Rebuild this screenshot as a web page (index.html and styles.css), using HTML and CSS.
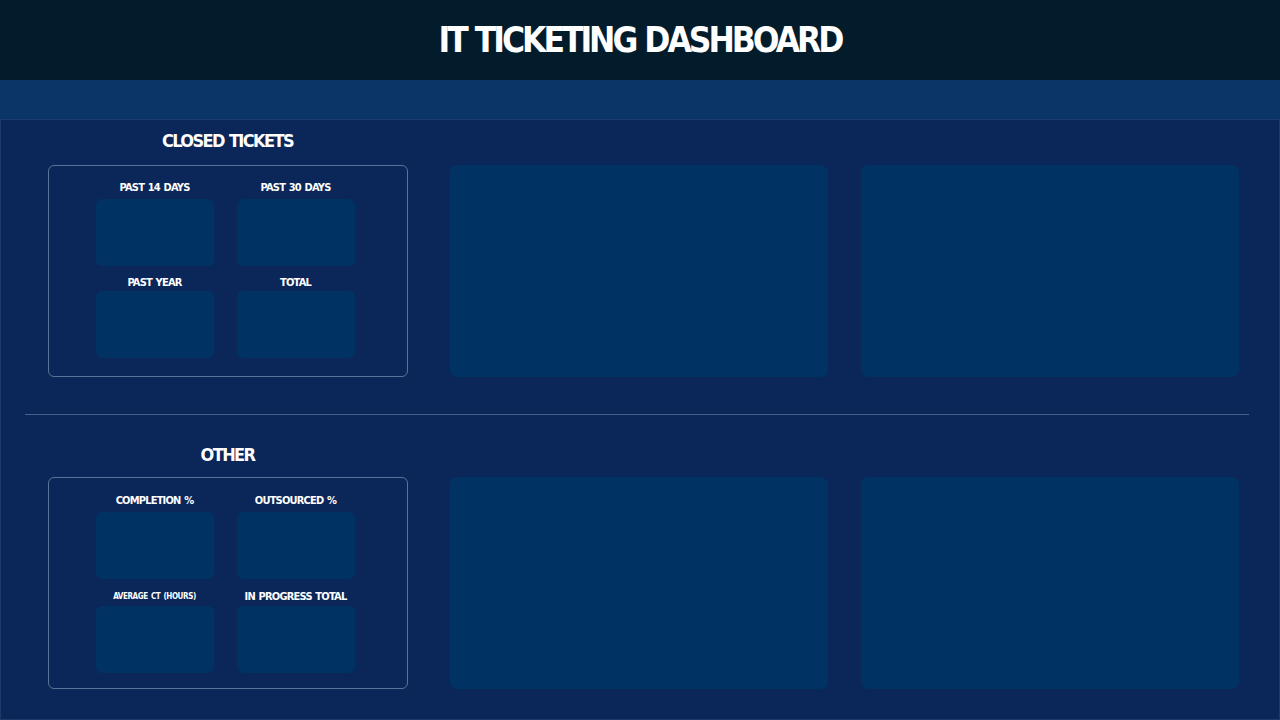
FILE: index.html
```html
<!DOCTYPE html>
<html lang="en">
<head>
<meta charset="utf-8">
<title>IT Ticketing Dashboard</title>
<link rel="stylesheet" href="styles.css">
</head>
<body>
<header class="topbar">
  <h1 class="title">IT TICKETING DASHBOARD</h1>
</header>
<div class="band"></div>
<main class="main">
  <section class="section">
    <div class="grid">
      <h2 class="section-title">CLOSED TICKETS</h2>
      <div></div><div></div>
      <div class="card">
        <div class="metrics">
          <div class="metric"><div class="label">PAST 14 DAYS</div><div class="box"></div></div>
          <div class="metric"><div class="label">PAST 30 DAYS</div><div class="box"></div></div>
          <div class="metric"><div class="label">PAST YEAR</div><div class="box"></div></div>
          <div class="metric"><div class="label">TOTAL</div><div class="box"></div></div>
        </div>
      </div>
      <div class="panel"></div>
      <div class="panel"></div>
    </div>
  </section>
  <hr class="divider">
  <section class="section section-other">
    <div class="grid">
      <h2 class="section-title section-title-other">OTHER</h2>
      <div></div><div></div>
      <div class="card card-other">
        <div class="metrics">
          <div class="metric"><div class="label">COMPLETION %</div><div class="box"></div></div>
          <div class="metric"><div class="label">OUTSOURCED %</div><div class="box"></div></div>
          <div class="metric"><div class="label label-small">AVERAGE CT (HOURS)</div><div class="box"></div></div>
          <div class="metric"><div class="label">IN PROGRESS TOTAL</div><div class="box"></div></div>
        </div>
      </div>
      <div class="panel"></div>
      <div class="panel"></div>
    </div>
  </section>
</main>
</body>
</html>
```
FILE: styles.css
```css
* { box-sizing: border-box; }
html, body {
  margin: 0;
  padding: 0;
  width: 1280px;
  height: 720px;
  overflow: hidden;
  background: #0b2658;
  font-family: "DejaVu Sans Condensed", "DejaVu Sans", sans-serif;
  font-stretch: condensed;
  color: #ffffff;
}
.topbar {
  height: 80px;
  background: #021c2c;
  display: flex;
  align-items: center;
  justify-content: center;
}
.title {
  margin: 0;
  font-size: 35px;
  font-weight: 700;
  line-height: 1;
  letter-spacing: -3px;
  word-spacing: 1px;
}
.band {
  height: 39px;
  background: #0a3566;
}
.main {
  height: 601px;
  border: 1px solid #1c3a6a;
  padding: 9px 23px 0 21px;
}
.grid {
  display: grid;
  grid-template-columns: repeat(3, 411px);
}
.section-title {
  margin: 0 0 12px;
  height: 24px;
  line-height: 24px;
  font-size: 18px;
  font-weight: 700;
  text-align: center;
  letter-spacing: -1.6px;
  word-spacing: 1px;
}
.section-title-other { margin-bottom: 10px; }
.card {
  justify-self: center;
  width: 360px;
  height: 212px;
  border: 1px solid #5a7399;
  border-radius: 6px;
  padding: 16px 0 0 47px;
}
.card-other { padding-top: 17px; }
.metrics {
  display: grid;
  grid-template-columns: 118px 118px;
  column-gap: 23px;
  row-gap: 11px;
}
.card-other .metrics { row-gap: 12px; }
.label {
  height: 12px;
  line-height: 12px;
  font-size: 11px;
  font-weight: 700;
  text-align: center;
  white-space: nowrap;
  letter-spacing: -0.8px;
  word-spacing: 1px;
  margin-bottom: 5px;
}
.metric:nth-child(n+3) .label { margin-bottom: 2px; }
.card-other .metric:nth-child(n+3) .label { margin-bottom: 3px; }
.label-small { font-size: 8px; letter-spacing: -0.4px; }
.box {
  height: 67px;
  background: #013264;
  border-radius: 6px;
}
.panel {
  justify-self: center;
  width: 378px;
  height: 212px;
  background: #013264;
  border-radius: 7px;
}
.divider {
  margin: 37px 7px 28px 3px;
  border: 0;
  height: 1px;
  background: #45628f;
}
```
